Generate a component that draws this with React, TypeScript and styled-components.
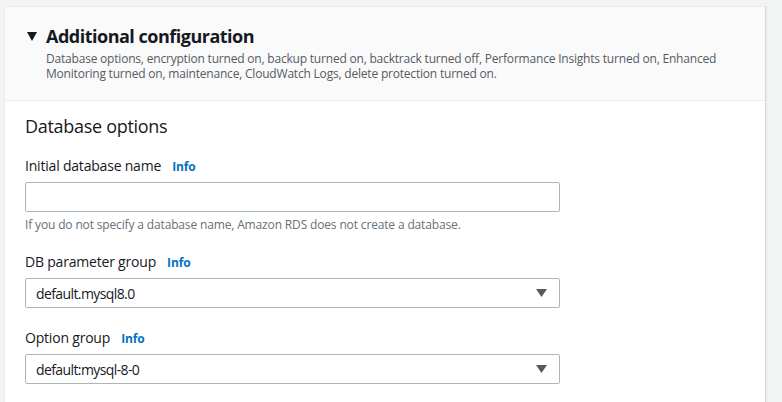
import React from "react";
import styled, { createGlobalStyle } from "styled-components";

const Global = createGlobalStyle`
  html, body { margin: 0; padding: 0; background: #f2f3f3; }
  body { font-family: "Open Sans", "Noto Sans", sans-serif; color: #16191f; }
  * { box-sizing: border-box; }
`;

const Page = styled.div`
  padding: 6px 16px 0 4px;
  height: 402px;
  overflow: hidden;
`;

const Card = styled.section`
  background: #fff;
  border-top: 1px solid #eaeded;
  border-left: 1px solid #eaeded;
  border-right: 1px solid #d5dbdb;
  box-shadow: 1px 0 0 #e6e9e9;
  height: 420px;
`;

const Header = styled.div`
  background: #fafafa;
  border-bottom: 1px solid #eaeded;
  padding: 16px 20px 19px 22px;
  height: 94px;
`;

const TitleRow = styled.div`
  display: flex;
  align-items: center;
  gap: 9px;
`;

const Caret = styled.svg`
  width: 10px;
  height: 9px;
  flex: none;
`;

const Title = styled.h2`
  margin: 0;
  font-size: 18px;
  font-weight: 700;
  line-height: 26px;
  letter-spacing: -0.5px;
  color: #16191f;
`;

const Description = styled.p`
  margin: 2px 0 0 19px;
  font-size: 12px;
  line-height: 15px;
  letter-spacing: -0.2px;
  color: #545b64;
  max-width: 690px;
`;

const Body = styled.div`
  padding: 12px 20px 0 20px;
`;

const SectionTitle = styled.h3`
  margin: 0 0 16px 0;
  font-size: 18px;
  font-weight: 400;
  line-height: 26px;
  letter-spacing: -0.3px;
  color: #16191f;
`;

const Field = styled.div<{ $gap?: number }>`
  display: flex;
  flex-direction: column;
  margin-bottom: ${(p) => p.$gap ?? 18}px;
`;

const LabelRow = styled.div`
  display: flex;
  align-items: baseline;
  gap: 11px;
  font-size: 14px;
  line-height: 22px;
  letter-spacing: -0.2px;
  color: #16191f;
  margin-bottom: 4px;
`;

const Info = styled.a`
  font-size: 12px;
  font-weight: 700;
  letter-spacing: -0.1px;
  color: #0073bb;
  text-decoration: none;
`;

const Input = styled.input`
  width: 535px;
  height: 30px;
  border: 1px solid #aab7b8;
  border-radius: 2px;
  background: #fff;
  font: inherit;
  font-size: 14px;
  padding: 0 10px;
  outline: none;
`;

const Hint = styled.div`
  font-size: 12px;
  line-height: 16px;
  letter-spacing: -0.15px;
  color: #687078;
  margin-top: 5px;
`;

const Select = styled.div`
  width: 535px;
  height: 30px;
  border: 1px solid #aab7b8;
  border-radius: 2px;
  background: #fff;
  display: flex;
  align-items: center;
  justify-content: space-between;
  padding: 0 12px 0 10px;
  font-size: 14px;
  letter-spacing: -0.6px;
  color: #16191f;
`;

const SelectCaret = styled.svg`
  width: 11px;
  height: 8px;
  flex: none;
`;

const Triangle = ({ color }: { color: string }) => (
  <polygon points="0,0 11,0 5.5,8" fill={color} />
);

const InfoLabel = ({ label }: { label: string }) => (
  <LabelRow>
    <span>{label}</span>
    <Info href="#">Info</Info>
  </LabelRow>
);

const SelectField = ({ label, value, gap }: { label: string; value: string; gap?: number }) => (
  <Field $gap={gap}>
    <InfoLabel label={label} />
    <Select>
      <span>{value}</span>
      <SelectCaret viewBox="0 0 11 8">
        <Triangle color="#545b64" />
      </SelectCaret>
    </Select>
  </Field>
);

export default function App() {
  return (
    <>
      <Global />
      <Page>
        <Card>
          <Header>
            <TitleRow>
              <Caret viewBox="0 0 10 9">
                <polygon points="0,0 10,0 5,9" fill="#16191f" />
              </Caret>
              <Title>Additional configuration</Title>
            </TitleRow>
            <Description>
              Database options, encryption turned on, backup turned on, backtrack turned off, Performance
              Insights turned on, Enhanced Monitoring turned on, maintenance, CloudWatch Logs, delete
              protection turned on.
            </Description>
          </Header>
          <Body>
            <SectionTitle>Database options</SectionTitle>
            <Field>
              <InfoLabel label="Initial database name" />
              <Input />
              <Hint>If you do not specify a database name, Amazon RDS does not create a database.</Hint>
            </Field>
            <SelectField label="DB parameter group" value="default.mysql8.0" gap={19} />
            <SelectField label="Option group" value="default:mysql-8-0" />
          </Body>
        </Card>
      </Page>
    </>
  );
}
